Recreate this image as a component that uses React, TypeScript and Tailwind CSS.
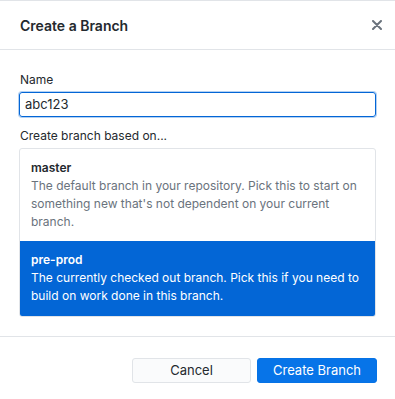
import React from "react";

export default function App() {
  return (
    <div
      className="w-[395px] h-[399px] bg-white border-t border-[#e1e4e8] text-[#24292e] flex flex-col"
      style={{ fontFamily: "Inter, 'Liberation Sans', sans-serif" }}
    >
      <div className="h-[49px] shrink-0 flex items-center justify-between pl-5 pr-[13px] border-b border-[#e1e4e8]">
        <div className="text-[14px] font-semibold">Create a Branch</div>
        <svg width="10" height="10" viewBox="0 0 10 10" className="text-[#6a737d]">
          <path d="M1 1L9 9M9 1L1 9" stroke="currentColor" strokeWidth="2" strokeLinecap="round" />
        </svg>
      </div>
      <div className="flex flex-col px-[19px] pt-[21px] pb-[19px] border-b border-[#e1e4e8] text-[12px]">
        <label className="leading-[18px] ml-px">Name</label>
        <div className="mt-[3px] h-[25px] rounded-[3px] border border-[#0366d6] shadow-[0_0_0_1px_rgba(3,102,214,0.3)] flex items-center px-[5px] text-[13px]">
          abc123
        </div>
        <div className="mt-[10px] leading-[18px] ml-px">Create branch based on...</div>
        <div className="mt-[3px] border border-[#e1e4e8] rounded-[3px] overflow-hidden">
          <div className="px-[11px] pt-[10px] pb-[10px]">
            <div className="font-semibold leading-[18px]">master</div>
            <div className="leading-[18px] text-[#6a737d]">
              The default branch in your repository. Pick this to start on something new that's not dependent on your current branch.
            </div>
          </div>
          <div className="px-[11px] pt-[10px] pb-[11px] bg-[#0366d6] text-white">
            <div className="font-semibold leading-[18px]">pre-prod</div>
            <div className="leading-[18px]">
              The currently checked out branch. Pick this if you need to build on work done in this branch.
            </div>
          </div>
        </div>
      </div>
      <div className="flex justify-end gap-[6px] px-[18px] pt-[21px]">
        <button className="w-[119px] h-[25px] rounded-[3px] border border-[#e1e4e8] bg-[#fafbfc] text-[13px] text-[#24292e]">
          Cancel
        </button>
        <button className="w-[120px] h-[25px] rounded-[3px] border border-[#0673e6] bg-[#0774e8] text-[13px] text-white">
          Create Branch
        </button>
      </div>
    </div>
  );
}
